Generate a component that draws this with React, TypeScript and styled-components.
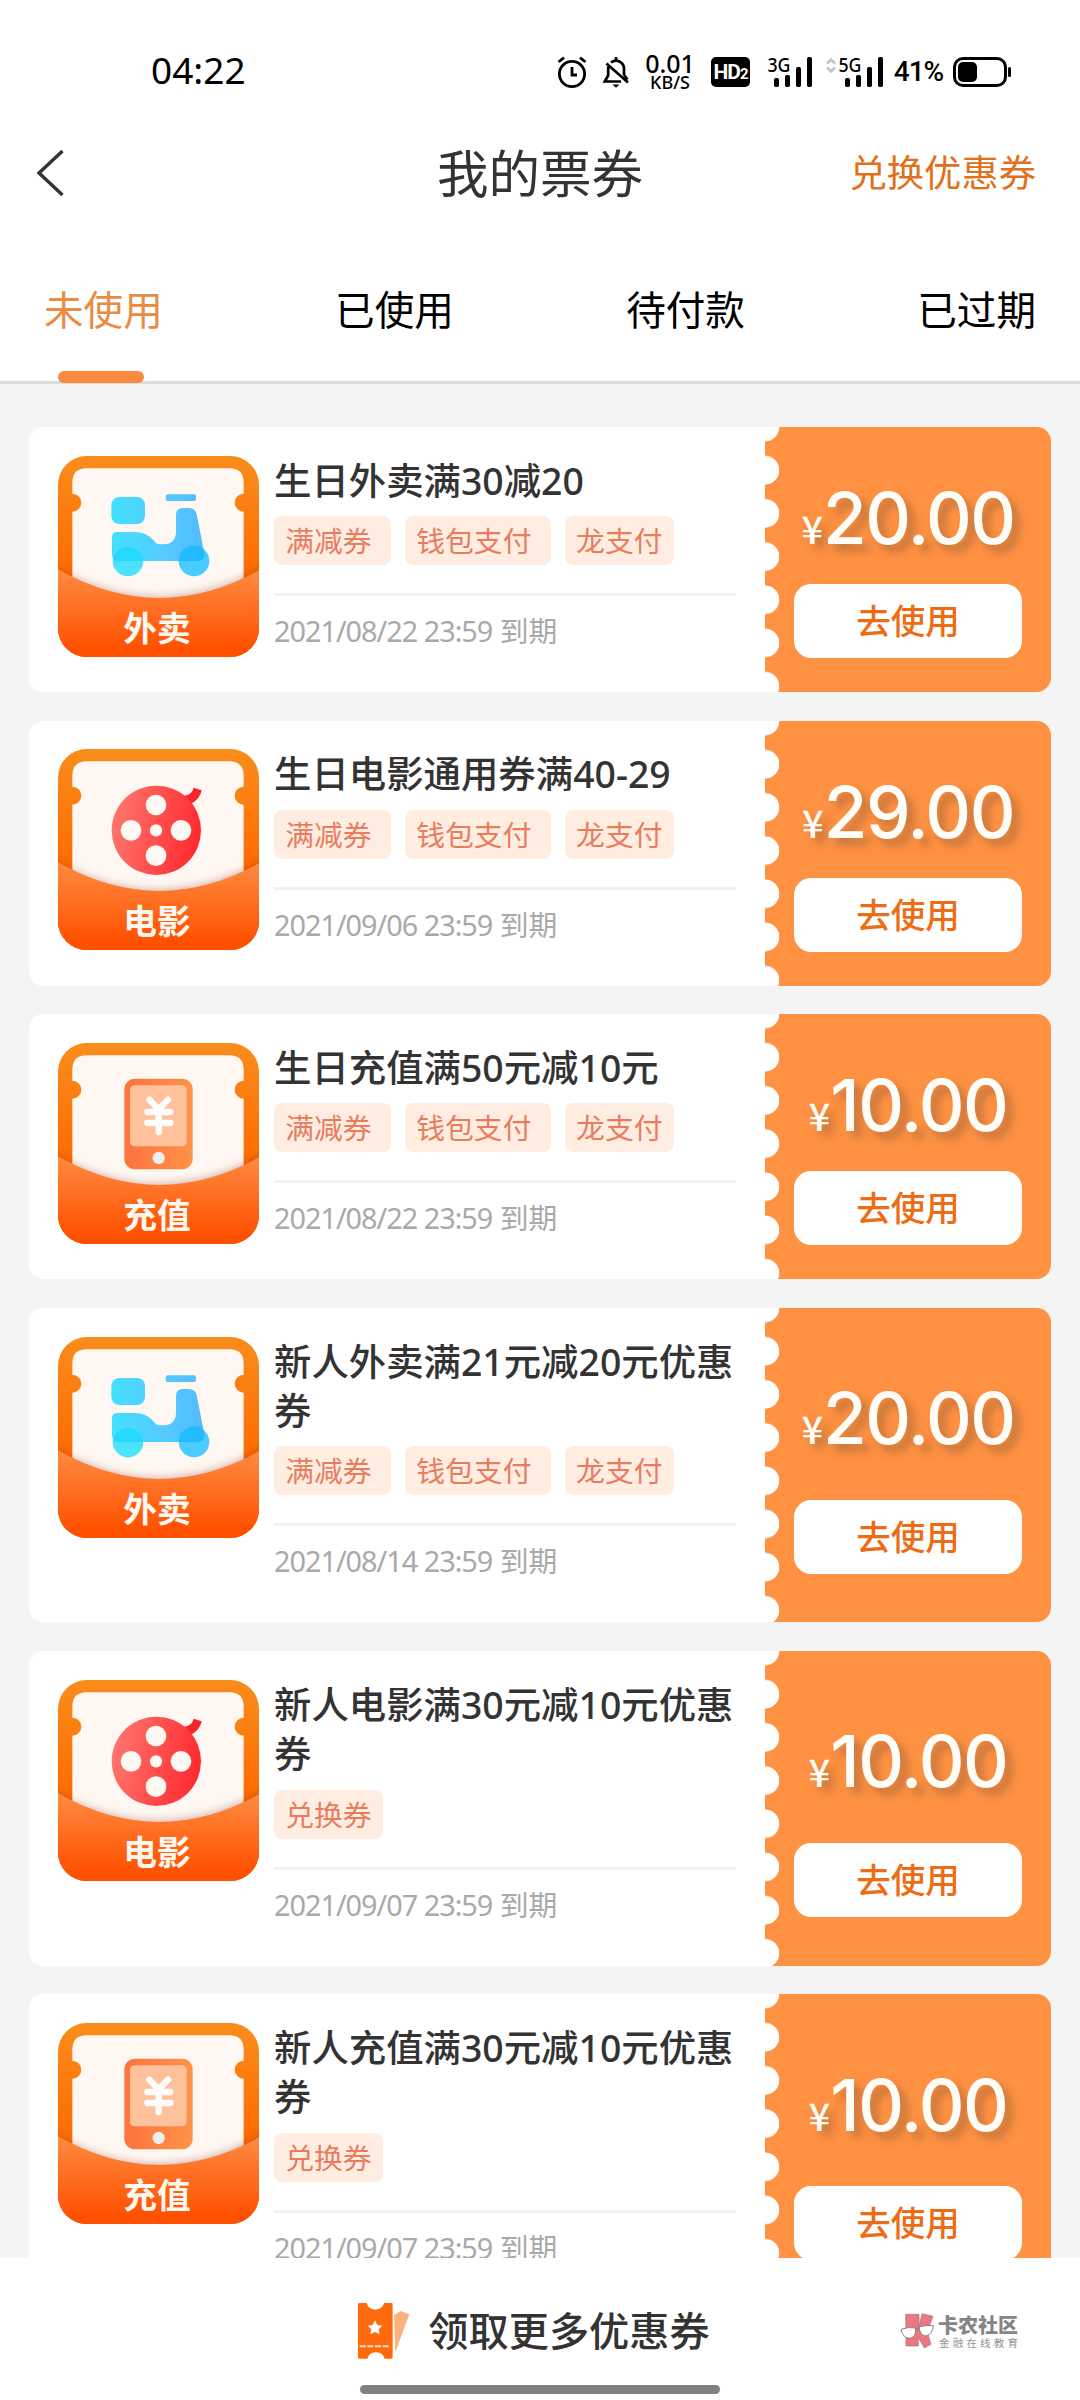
import React from "react";
import styled, { createGlobalStyle } from "styled-components";

const SANS = '"Noto Sans", "Noto Sans CJK SC", sans-serif';
const ACCENT = "#ff9142";

const GlobalStyle = createGlobalStyle`
  * { box-sizing: border-box; }
  body { margin: 0; background: #fff; font-family: ${SANS}; }
`;

const Screen = styled.div`
  width: 1080px;
  height: 2400px;
  display: flex;
  flex-direction: column;
  overflow: hidden;
  background: #fff;
`;

/* ---------- status bar ---------- */

const StatusBar = styled.div`
  height: 115px;
  padding: 28px 69px 0 151px;
  display: flex;
  align-items: flex-start;
  justify-content: space-between;
  flex: none;
  color: #000;
`;

const Clock = styled.div`
  font-size: 37px;
  line-height: 44px;
  padding-top: 20px;
`;

const StatusIcons = styled.div`
  display: flex;
  align-items: center;
  height: 88px;
`;

const StatusSlot = styled.div<{ $w: number; $gap?: number }>`
  width: ${(p) => p.$w}px;
  margin-left: ${(p) => p.$gap ?? 0}px;
  display: flex;
  justify-content: center;
  align-items: center;
  white-space: nowrap;
  svg { display: block; overflow: visible; flex: none; }
`;

const NetSpeed = styled.div`
  display: flex;
  flex-direction: column;
  align-items: center;
  font-weight: 500;
  font-size: 25px;
  line-height: 20px;
  small { font-size: 18px; line-height: 19px; }
`;

const HdBadge = styled.div`
  width: 39px;
  height: 30px;
  border-radius: 5px;
  background: #000;
  color: #fff;
  display: flex;
  justify-content: center;
  align-items: baseline;
  font: 700 21px/30px Roboto, sans-serif;
  letter-spacing: -1px;
  small { font-size: 15px; }
`;

const Percent = styled.span`
  font: 500 28px/30px Roboto, sans-serif;
  letter-spacing: -1px;
`;

function Signal({ label, arrows }: { label: string; arrows?: boolean }) {
  return (
    <svg width="57" height="30" viewBox="0 0 57 30">
      {arrows && (
        <g fill="none" stroke="#c4c4c4" strokeWidth="2.6">
          <path d="M1 6.5 5 2.5l4 4M1 10.5l4 4 4-4" />
        </g>
      )}
      <text x="12.5" y="14.5" fontFamily="Noto Sans, sans-serif" fontWeight="500" fontSize="19.5" textLength="23" lengthAdjust="spacingAndGlyphs">{label}</text>
      <rect x="19" y="21" width="5" height="9" rx="1.8" />
      <rect x="30" y="18" width="5" height="12" rx="1.8" />
      <rect x="41" y="10" width="5" height="20" rx="1.8" />
      <rect x="52" y="0" width="5" height="30" rx="1.8" />
    </svg>
  );
}

/* ---------- header ---------- */

const NavBar = styled.header`
  height: 116px;
  flex: none;
  padding: 0 44px 0 36px;
  display: grid;
  grid-template-columns: 1fr auto 1fr;
  align-items: center;
  svg { display: block; }
`;

const PageTitle = styled.h1`
  margin: 0 0 0 8px;
  font-size: 51.5px;
  line-height: 60px;
  font-weight: 400;
  color: #333;
`;

const RedeemLink = styled.a`
  justify-self: end;
  font-size: 37.3px;
  line-height: 44px;
  color: #e0701b;
`;

const Tabs = styled.nav`
  height: 153px;
  flex: none;
  padding: 0 44px;
  display: flex;
  justify-content: space-between;
  border-bottom: 3px solid #dcdcdc;
`;

const Tab = styled.div<{ $active?: boolean }>`
  position: relative;
  padding-top: 51px;
  font-size: 39.6px;
  line-height: 56px;
  color: ${(p) => (p.$active ? "#e98c42" : "#000")};
`;

const TabMark = styled.span`
  position: absolute;
  left: 14px;
  bottom: -2px;
  width: 86px;
  height: 12px;
  border-radius: 6px;
  background: #f98a3e;
`;

/* ---------- coupons ---------- */

const List = styled.main`
  flex: 1;
  min-height: 0;
  overflow: hidden;
  background: #f4f4f4;
  padding: 43px 29px 0;
  display: flex;
  flex-direction: column;
  gap: 28.6px;
`;

const Card = styled.article<{ $tall?: boolean }>`
  flex: none;
  height: ${(p) => (p.$tall ? 314.6 : 265)}px;
  border-radius: 14.4px;
  overflow: hidden;
  background: #fff;
  display: flex;
  justify-content: space-between;
`;

const CardMain = styled.div`
  display: flex;
  padding: 28.8px 0 0 29px;
`;

const IconBox = styled.div`
  width: 201px;
  height: 201px;
  margin-right: 15px;
  flex: none;
  svg { display: block; }
`;

const Info = styled.div`
  width: 462px;
  display: flex;
  flex-direction: column;
`;

const Name = styled.h2`
  margin: 0;
  font-size: 37.4px;
  line-height: 49.4px;
  font-weight: 500;
  color: #333;
`;

const Tags = styled.div`
  display: flex;
  gap: 14.4px;
  margin-top: 11px;
  padding-bottom: 28px;
  border-bottom: 3px solid #f2f2f2;
`;

const Tag = styled.span`
  height: 49px;
  padding: 0 11.6px 0 11.2px;
  border-radius: 8px;
  background: #ffede2;
  color: #ea7c5e;
  font-size: 28.8px;
  line-height: 50px;
  white-space: pre;
`;

const Expiry = styled.div`
  margin-top: 14px;
  font-size: 28.8px;
  line-height: 42px;
  color: #a9a9a9;
  white-space: nowrap;
`;

const Stamp = styled.time`
  letter-spacing: -1px;
`;

const Stub = styled.div<{ $tall?: boolean }>`
  width: 286px;
  flex: none;
  padding: ${(p) => (p.$tall ? "80.5px" : "61px")} 0 0 29px;
  display: flex;
  flex-direction: column;
  gap: ${(p) => (p.$tall ? 50.5 : 35)}px;
  background:
    radial-gradient(circle at 0 21.6px, #fff 14px, transparent 14.6px) 0 -21.6px / 15px 43.2px repeat-y,
    ${ACCENT};
`;

const Price = styled.div`
  width: 228px;
  height: 61px;
  display: flex;
  justify-content: center;
  align-items: baseline;
  color: #fffdf8;
  font: 500 71px/61px Inter, sans-serif;
  letter-spacing: -1.5px;
  text-shadow: 7px 7px 9px rgba(70, 60, 50, 0.34);
`;

const Yen = styled.span`
  font: 500 38px/61px "Noto Sans CJK SC", sans-serif;
  letter-spacing: 0;
`;

const UseButton = styled.button`
  width: 228px;
  height: 74px;
  flex: none;
  border: 0;
  padding: 0;
  border-radius: 17px;
  background: #fff;
  color: #ec6d15;
  font: 500 34.5px/74px ${SANS};
`;

/* ---------- footer ---------- */

const Footer = styled.footer`
  height: 142px;
  flex: none;
  background: #fff;
  display: grid;
  grid-template-columns: 1fr auto 1fr;
  grid-template-rows: 127px 9px;
`;

const More = styled.div`
  grid-column: 2;
  display: flex;
  align-items: center;
  gap: 18px;
  padding: 18px 12px 0 0;
  font-size: 40.2px;
  line-height: 56px;
  font-weight: 500;
  color: #333;
  svg { display: block; }
`;

const Brand = styled.div`
  display: flex;
  justify-self: end;
  align-self: start;
  margin: 54.500px 61px 0 0;
  gap: 4px;
  svg { display: block; }
`;

const BrandText = styled.div`
  width: 81px;
  font-weight: 900;
  font-size: 20px;
  line-height: 25px;
  color: #858585;
  white-space: nowrap;
  small {
    display: block;
    font-weight: 400;
    font-size: 10.6px;
    line-height: 10px;
    letter-spacing: 3.1px;
    color: #949494;
    padding-left: 1px;
  }
`;

const HomeBar = styled.div`
  grid-column: 1 / -1;
  justify-self: center;
  width: 360px;
  height: 9px;
  border-radius: 5px;
  background: #808080;
`;

/* ---------- drawings ---------- */

type Kind = "外卖" | "电影" | "充值";

function Scooter({ id }: { id: string }) {
  const fill = `url(#${id}-art)`;
  return (
    <g>
      <defs>
        <linearGradient id={`${id}-art`} gradientUnits="userSpaceOnUse" x1="160" y1="0" x2="455" y2="0">
          <stop offset="0" stopColor="#43e0ff" />
          <stop offset="0.5" stopColor="#54ccff" />
          <stop offset="1" stopColor="#52b8ff" />
        </linearGradient>
      </defs>
      <rect x="160" y="123" width="101" height="81" rx="24" fill={fill} />
      <rect x="323" y="115" width="91" height="20" rx="6" fill={fill} />
      <path
        d="M178 228H226C262 228 278 242 291 258Q296 265 304 265H318C342 265 354 250 354 226V177Q354 156 374 156H392Q412 156 416 175L439 292Q442 315 418 315H182Q162 315 162 295V244Q162 228 178 228Z"
        fill={fill}
      />
      <circle cx="210" cy="315" r="46" fill="#4be2fd" />
      <circle cx="408" cy="315" r="46" fill="#49ccff" />
      <path d="M165 308A46 46 0 0 1 255 308V315H182Q168 315 165 308Z" fill="#26d8fd" />
      <path d="M362 315A46 46 0 0 1 437 279L439 292Q442 315 418 315Z" fill="#23baff" />
    </g>
  );
}

function Reel({ id }: { id: string }) {
  return (
    <g>
      <defs>
        <linearGradient id={`${id}-art`} x1="0" x2="1" y1="0.3" y2="0.5">
          <stop offset="0" stopColor="#ff776f" />
          <stop offset="1" stopColor="#ff2a30" />
        </linearGradient>
      </defs>
      <path d="M378 140Q402 138 407 116L431 124Q426 150 400 164Z" fill="#f8242c" />
      <circle cx="295" cy="244" r="134" fill={`url(#${id}-art)`} />
      <g fill="#fff9f3">
        <circle cx="294" cy="168" r="31" />
        <circle cx="219" cy="244" r="31" />
        <circle cx="369" cy="244" r="31" />
        <circle cx="294" cy="320" r="31" />
        <circle cx="294" cy="244" r="18.5" />
      </g>
    </g>
  );
}

function Phone({ id }: { id: string }) {
  return (
    <g>
      <defs>
        <linearGradient id={`${id}-art`} x1="0" x2="1">
          <stop offset="0" stopColor="#fb7440" />
          <stop offset="1" stopColor="#ff9248" />
        </linearGradient>
      </defs>
      <rect x="199" y="107" width="205" height="272" rx="32" fill={`url(#${id}-art)`} />
      <rect x="216" y="127" width="170" height="183" rx="14" fill="#ffc19c" />
      <circle cx="302" cy="345" r="18.5" fill="#f1eeee" />
      <path d="M274 170 302 199 330 170M302 199V267M268 207H337M268 240H337" fill="none" stroke="#fffdfb" strokeWidth="19" strokeLinecap="round" strokeLinejoin="round" />
    </g>
  );
}

function CouponIcon({ kind, id }: { kind: Kind; id: string }) {
  const Art = kind === "外卖" ? Scooter : kind === "电影" ? Reel : Phone;
  return (
    <svg width="201" height="201" viewBox="0 0 603 603">
      <defs>
        <linearGradient id={`${id}-back`} x1="0" x2="0" y1="0" y2="1">
          <stop offset="0" stopColor="#f98d1c" />
          <stop offset="0.6" stopColor="#ff6a00" />
        </linearGradient>
        <linearGradient id={`${id}-front`} x1="0" x2="0" y1="0" y2="1">
          <stop offset="0" stopColor="#ff8b41" />
          <stop offset="0.92" stopColor="#ff5000" />
        </linearGradient>
        <clipPath id={`${id}-clip`}>
          <rect width="603" height="603" rx="86" />
        </clipPath>
        <filter id={`${id}-blur`} x="-10%" y="-20%" width="120%" height="140%">
          <feGaussianBlur stdDeviation="14" />
        </filter>
      </defs>
      <g clipPath={`url(#${id}-clip)`}>
        <rect width="603" height="603" fill={`url(#${id}-back)`} />
        <path
          d="M43 80Q43 37 86 37H514Q557 37 557 80V113A27 27 0 0 0 557 167V480H43V167A27 27 0 0 0 43 113Z"
          fill="#fff8f2"
        />
        <path d="M-40 320Q301 530 643 320V603H-40Z" fill="#8a2b20" opacity="0.42" filter={`url(#${id}-blur)`} />
        <Art id={id} />
        <path d="M0 340Q301 510 603 343V603H0Z" fill={`url(#${id}-front)`} />
      </g>
      <text x="297" y="556" textAnchor="middle" fontFamily="Noto Sans CJK SC" fontWeight="700" fontSize="101" fill="#fff8f0">{kind}</text>
    </svg>
  );
}

/* ---------- data ---------- */

interface Coupon {
  kind: Kind;
  name: string;
  tags: string[];
  date: string;
  price: string;
  tall?: boolean;
}

const FULL_TAGS = ["满减券 ", "钱包支付 ", "龙支付"];

const coupons: Coupon[] = [
  { kind: "外卖", name: "生日外卖满30减20", tags: FULL_TAGS, date: "2021/08/22 23:59", price: "20.00" },
  { kind: "电影", name: "生日电影通用券满40-29", tags: FULL_TAGS, date: "2021/09/06 23:59", price: "29.00" },
  { kind: "充值", name: "生日充值满50元减10元", tags: FULL_TAGS, date: "2021/08/22 23:59", price: "10.00" },
  { kind: "外卖", name: "新人外卖满21元减20元优惠券", tags: FULL_TAGS, date: "2021/08/14 23:59", price: "20.00", tall: true },
  { kind: "电影", name: "新人电影满30元减10元优惠券", tags: ["兑换券"], date: "2021/09/07 23:59", price: "10.00", tall: true },
  { kind: "充值", name: "新人充值满30元减10元优惠券", tags: ["兑换券"], date: "2021/09/07 23:59", price: "10.00", tall: true },
];

export default function App() {
  return (
    <>
      <GlobalStyle />
      <Screen>
        <StatusBar>
          <Clock>04:22</Clock>
          <StatusIcons>
            <StatusSlot $w={30}>
              <svg width="30" height="32" viewBox="0 0 30 32" fill="none" stroke="#000" strokeWidth="2.8">
                <circle cx="15" cy="18" r="12.6" />
                <path d="M15 11v8h5M1.5 6 7 1.6M28.500 6 23 1.6" />
              </svg>
            </StatusSlot>
            <StatusSlot $w={26} $gap={16}>
              <svg width="26" height="31" viewBox="0 0 26 31" fill="none" stroke="#000" strokeWidth="2.7">
                <path d="M8 5.500A8 8 0 0 1 21 11.500V18M5.200 9.500V18.500L1.800 24.500H18M3.500 6.500 25 25.500" />
                <path d="M13 0v4M21 18l3.500 4.500" />
                <path d="M9.500 27.500h7L13 30.700Z" fill="#000" stroke="none" />
              </svg>
            </StatusSlot>
            <StatusSlot $w={48} $gap={17}>
              <NetSpeed>
                0.01<small>KB/S</small>
              </NetSpeed>
            </StatusSlot>
            <StatusSlot $w={39} $gap={17}>
              <HdBadge>
                HD<small>2</small>
              </HdBadge>
            </StatusSlot>
            <StatusSlot $w={57} $gap={5}>
              <Signal label="3G" />
            </StatusSlot>
            <StatusSlot $w={57} $gap={14}>
              <Signal label="5G" arrows />
            </StatusSlot>
            <StatusSlot $w={51} $gap={10}>
              <Percent>41%</Percent>
            </StatusSlot>
            <StatusSlot $w={58} $gap={9}>
              <svg width="58" height="30" viewBox="0 0 58 30">
                <rect x="1.500" y="1.500" width="51" height="27" rx="8.500" fill="none" stroke="#000" strokeWidth="3" />
                <rect x="5" y="5" width="19" height="20" rx="5" />
                <rect x="55" y="10" width="3" height="10" rx="1.500" />
              </svg>
            </StatusSlot>
          </StatusIcons>
        </StatusBar>

        <NavBar>
          <svg width="28" height="46" viewBox="0 0 28 46" fill="none" stroke="#333" strokeWidth="3.4">
            <path d="M26.500 1 3 23l23.500 22" />
          </svg>
          <PageTitle>我的票券</PageTitle>
          <RedeemLink>兑换优惠券</RedeemLink>
        </NavBar>

        <Tabs>
          <Tab $active>
            未使用
            <TabMark />
          </Tab>
          <Tab>已使用</Tab>
          <Tab>待付款</Tab>
          <Tab>已过期</Tab>
        </Tabs>

        <List>
          {coupons.map((c, i) => (
            <Card key={i} $tall={c.tall}>
              <CardMain>
                <IconBox>
                  <CouponIcon kind={c.kind} id={`coupon${i}`} />
                </IconBox>
                <Info>
                  <Name>{c.name}</Name>
                  <Tags>
                    {c.tags.map((t) => (
                      <Tag key={t}>{t}</Tag>
                    ))}
                  </Tags>
                  <Expiry>
                    <Stamp>{c.date}</Stamp> 到期
                  </Expiry>
                </Info>
              </CardMain>
              <Stub $tall={c.tall}>
                <Price>
                  <Yen>¥</Yen>
                  {c.price}
                </Price>
                <UseButton>去使用</UseButton>
              </Stub>
            </Card>
          ))}
        </List>

        <Footer>
          <More>
            <svg width="52" height="56" viewBox="0 0 156 168">
              <path d="M108 36 128 24 154 34 112 148Z" fill="#ffb07f" />
              <path
                d="M4 0H26Q30 18 52 20Q74 18 78 0H100Q104 0 104 4V163Q104 167 100 167H80Q74 148 54 148Q34 148 28 167H4Q0 167 0 163V4Q0 0 4 0Z"
                fill="#ff6a0d"
              />
              <path d="m51 52 7 14 15 2-11 11 3 15-14-7-14 7 3-15-11-11 15-2Z" fill="#fff" />
              <path d="M5 130H95" stroke="#ffe3cf" strokeWidth="6" strokeDasharray="18 5" />
            </svg>
            领取更多优惠券
          </More>
          <Brand>
            <svg width="34" height="36" viewBox="0 0 102 108">
              <g fill="#ee7680" stroke="#8a8385" strokeWidth="2">
                <path d="M17 4H57V40L66 2 99 10 82 56 93 94 73 105 55 74V99H18Z" />
              </g>
              <g fill="#fff" stroke="#8a8385" strokeWidth="3">
                <path d="M3 49Q26 40 46 45Q50 72 30 76Q9 77 3 49Z" />
                <path d="M57 41Q78 36 100 38Q98 64 78 69Q60 68 57 41Z" />
                <path d="M46 49 57 45" />
              </g>
            </svg>
            <BrandText>
              卡农社区<small>金融在线教育</small>
            </BrandText>
          </Brand>
          <HomeBar />
        </Footer>
      </Screen>
    </>
  );
}
